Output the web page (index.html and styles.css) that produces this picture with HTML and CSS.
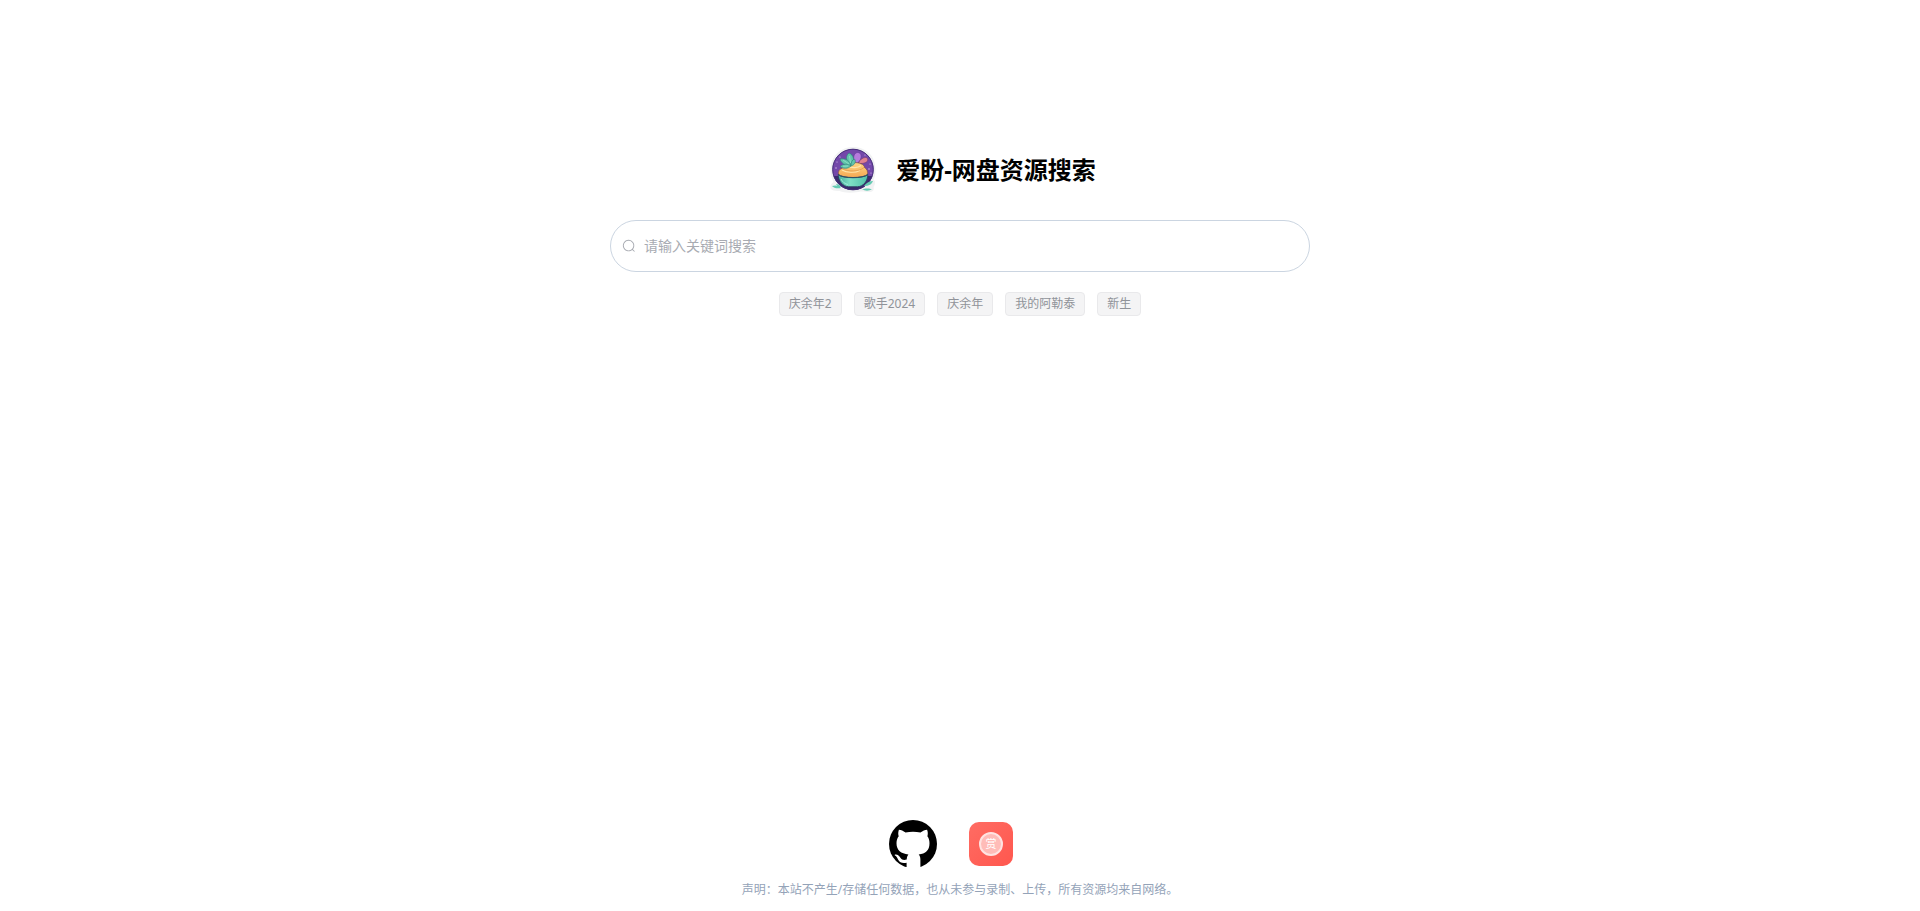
FILE: index.html
```html
<!DOCTYPE html>
<html lang="zh-CN">
<head>
<meta charset="UTF-8">
<meta name="viewport" content="width=device-width, initial-scale=1">
<title>爱盼-网盘资源搜索</title>
<link rel="stylesheet" href="styles.css">
</head>
<body>
<main class="home">
  <header class="brand">
    <svg class="brand-logo" viewBox="0 0 60 60" aria-hidden="true">
      <defs>
        <clipPath id="disc"><circle cx="33" cy="29.500" r="20.500"/></clipPath>
        <linearGradient id="bowl" x1="0" y1="0" x2="1" y2="0"><stop offset="0" stop-color="#46ad9c"/><stop offset=".4" stop-color="#7fe0c6"/><stop offset="1" stop-color="#4fbfa8"/></linearGradient>
        <linearGradient id="cream" x1="0" y1="0" x2="0" y2="1"><stop offset="0" stop-color="#ffd582"/><stop offset="1" stop-color="#f3a450"/></linearGradient>
      </defs>
      <path fill="#f1f2f3" d="M33 7c14 0 22.500 10 22.500 22 0 4-.5 8-2 11 2 1 2 4 0 7 1 3-1 5-4 5-5 0-7-1-11 0-8 1-14 1-19-1-6 0-10-1-9-5 0-2 2-3 3-4-2-4-3-8-3-13C11 17 20 7 33 7z"/>
      <circle cx="33" cy="29.500" r="20.500" fill="#7448aa"/>
      <path clip-path="url(#disc)" fill="#3a2b6c" d="M12 36h42v18H12z"/>
      <circle cx="33" cy="29.500" r="20.300" fill="none" stroke="#463079" stroke-width="1"/>
      <g fill="#d9c3f0"><circle cx="17" cy="22" r=".6"/><circle cx="20" cy="17" r=".6"/><circle cx="16" cy="28" r=".7"/><circle cx="50" cy="24" r=".6"/><circle cx="49" cy="29" r=".7"/><circle cx="51" cy="33" r=".6"/><circle cx="45" cy="15" r=".6"/></g>
      <path fill="#b67bdc" stroke="#5f3995" stroke-width=".6" d="M34 22c-1-5 0-9 3.500-9.500 4 0 4.500 4 2.500 8-1 2-3 3-6 1.500z"/>
      <path fill="#df8191" stroke="#72396f" stroke-width=".6" d="M38.500 23c1-3 4-5.500 7-5.500 3 0 3 4 0 5-2 1-5 1.500-7 .5z"/>
      <path fill="url(#cream)" stroke="#7a4a3a" stroke-width=".6" d="M18.500 35c-.5-4 1-6 4-7 1-4 6-5.500 11-5.500 6 0 11 2 11 5 2.500 1.500 3.500 4 3 7.500-5 5-24 5-29 0z"/>
      <path fill="none" stroke="#ffe6ac" stroke-width="1.100" d="M27 26c5 2.500 11 2 14-.5M22 30c5 3 13 3 18 .5"/>
      <path fill="none" stroke="#dc9040" stroke-width=".6" d="M22 28.500c6 3.500 17 3.500 22-1"/>
      <g fill="#62c5ab" stroke="#2b7f79" stroke-width=".6">
        <path d="M31 25c-5-3-6-9-2-12 5 2 6 8 2 12z"/>
        <path d="M31 26c-6 0-10-3-11-7 6-1 10 2 11 7z"/>
        <path d="M31 26c-3 3-8 3-11 .5 3-3 8-3 11-.5z"/>
        <path d="M31 26c0-4 1-6 3.500-7 2 3 0 6-3.500 7z"/>
      </g>
      <path fill="none" stroke="#b4f2dc" stroke-width=".5" d="M30.500 23l-1-7m-.5 8-6-4m5 6-5 .3"/>
      <path fill="url(#bowl)" stroke="#2b3a62" stroke-width=".9" d="M18.200 34.500c0 6.500 4.500 12 10.300 12.300h9c6-.3 10.300-5.800 10.300-12.300-4 4.300-25.600 4.300-29.600 0z"/>
      <path fill="none" stroke="#2b5265" stroke-width="1" d="M18.200 34.300c4 4.300 25.600 4.300 29.600 0"/>
      <path fill="none" stroke="#b0f2de" stroke-width=".8" d="M21 39c1.500 3 4 5 7 5.500"/>
      <g fill="#66cbb3"><path d="M12 46c4-1.500 7 0 9 2-4 .8-7 .2-9-2zM44 46c2-3 5-5 9-5-1 3-4 5-9 5zM42 49.500c3-1.500 8-1.500 10 0-3 1.500-7 1.500-10 0zM16 44c2 0 4 1 5 3-3 0-4-1-5-3z"/></g>
    </svg>
    <h1 class="brand-title">爱盼-网盘资源搜索</h1>
  </header>

  <form class="search" role="search">
    <label class="search-label" for="keyword" aria-label="搜索">
      <svg class="search-icon" viewBox="0 0 1024 1024" aria-hidden="true"><path fill="currentColor" d="m795.904 750.720 124.992 124.928a32 32 0 0 1-45.248 45.248L750.656 795.904a416 416 0 1 1 45.248-45.248zM480 832a352 352 0 1 0 0-704 352 352 0 0 0 0 704"/></svg>
    </label>
    <input class="search-input" id="keyword" type="text" placeholder="请输入关键词搜索" autocomplete="off">
  </form>

  <nav class="tags" aria-label="热门搜索">
    <button class="tag" type="button">庆余年2</button>
    <button class="tag" type="button">歌手2024</button>
    <button class="tag" type="button">庆余年</button>
    <button class="tag" type="button">我的阿勒泰</button>
    <button class="tag" type="button">新生</button>
  </nav>
</main>

<footer class="footer">
  <div class="links">
    <a class="link" href="#github" aria-label="GitHub">
      <svg class="github" viewBox="0 0 48 48" aria-hidden="true">
        <defs><clipPath id="mark"><path d="M0 0h48v47H0z"/></clipPath></defs>
        <circle cx="24" cy="24" r="24" clip-path="url(#mark)"/>
        <path fill="#fff" d="M9.900 9.800c2.200 0 4.400 1.200 6.600 2.800 5-1.200 10-1.200 15 0 2.200-1.600 4.400-2.800 6.600-2.800.9 2.300.9 4.400.3 6.500 1.500 2 2.100 4.200 2.100 6.900 0 7.200-4 10.400-10.800 11.300 1.200 1.300 1.700 3 1.700 5V48H17.600v-5.200c-4 .8-6.900 0-8.400-3-.8-1.800-1.600-3.100-3.200-4.200-.7-.7-.2-1.100.8-1.100 2.100 0 3.500 1.500 4.600 3.200 1.500 2.200 3.600 2.700 6.300 1.700.1-2.100.8-3.800 1.700-4.900C12 33.500 7.500 30.200 7.500 23.200c0-2.700.7-4.900 2.200-6.900-.7-2-.6-4.200.2-6.500z"/>
      </svg>
    </a>
    <a class="link" href="#reward" aria-label="赞赏">
      <span class="reward"><span class="reward-coin">赏</span></span>
    </a>
  </div>
  <p class="notice">声明：本站不产生/存储任何数据，也从未参与录制、上传，所有资源均来自网络。</p>
</footer>
</body>
</html>
```
FILE: styles.css
```css
* {
  box-sizing: border-box;
}

body {
  display: flex;
  flex-direction: column;
  justify-content: space-between;
  min-height: 100vh;
  margin: 0;
  background: #fff;
  font-family: "Noto Sans", "Noto Sans CJK SC", sans-serif;
}

.home {
  display: flex;
  flex-direction: column;
  align-items: center;
  padding: 140px 20px 0;
}

.brand {
  display: flex;
  align-items: center;
  gap: 16px;
  padding-right: 4px;
}

.brand-logo {
  width: 60px;
  height: 60px;
}

.brand-title {
  margin: 0;
  font-size: 24px;
  line-height: 32px;
  font-weight: 700;
  color: #000;
}

.search {
  display: flex;
  align-items: center;
  gap: 8px;
  width: 100%;
  max-width: 700px;
  height: 52px;
  margin-top: 20px;
  padding: 0 11px;
  border: 1px solid #cbd5e1;
  border-radius: 26px;
  color: #a8abb2;
}

.search-label {
  display: flex;
}

.search-icon {
  width: 14px;
  height: 14px;
}

.search-input {
  flex: 1;
  min-width: 0;
  padding: 0;
  border: 0;
  outline: 0;
  background: none;
  font-family: inherit;
  font-size: 14px;
  line-height: 24px;
  color: #606266;
}

.search-input::placeholder {
  color: #a8abb2;
}

.tags {
  display: flex;
  flex-wrap: wrap;
  justify-content: center;
  gap: 12px;
  margin-top: 20px;
}

.tag {
  height: 24px;
  padding: 0 9px;
  border: 1px solid #e9e9eb;
  border-radius: 4px;
  background: #f4f4f5;
  font-family: inherit;
  font-size: 12px;
  line-height: 20px;
  color: #909399;
  cursor: pointer;
}

.footer {
  display: flex;
  flex-direction: column;
  align-items: center;
  gap: 12px;
  padding: 0 20px 11px;
}

.links {
  display: flex;
  align-items: center;
  gap: 32px;
  padding-right: 18px;
}

.link {
  display: flex;
  color: #000;
  text-decoration: none;
}

.github {
  width: 48px;
  height: 48px;
}

.reward {
  display: grid;
  place-items: center;
  width: 44px;
  height: 44px;
  border-radius: 10px;
  background: linear-gradient(135deg, #ff6c63, #ff574e);
}

.reward-coin {
  display: grid;
  place-items: center;
  width: 24px;
  height: 24px;
  border: 2px solid #ffe3e1;
  border-radius: 50%;
  background: #ffbcb8;
  font-size: 11px;
  line-height: 20px;
  color: #fff;
}

.notice {
  margin: 0;
  font-size: 12px;
  line-height: 20px;
  color: #94a3b8;
}
```
